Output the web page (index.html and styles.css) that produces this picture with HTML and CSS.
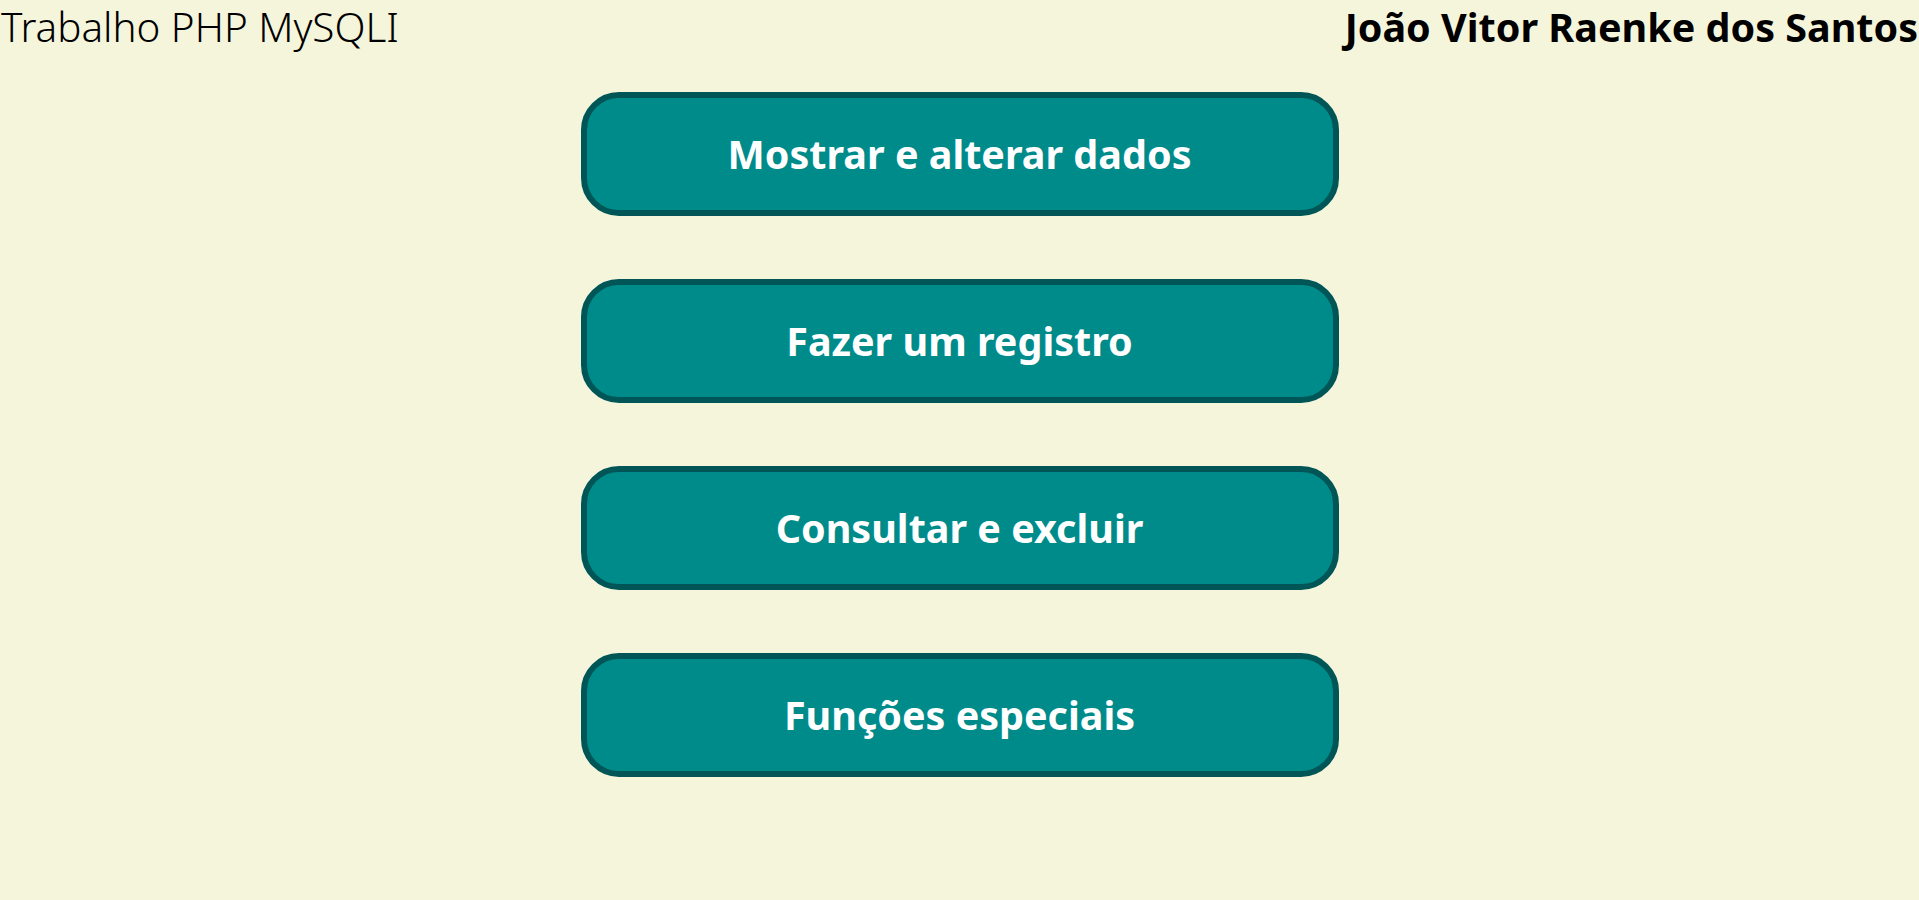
FILE: index.html
```html
<!DOCTYPE html>
<html lang="pt-BR">
<head>
<meta charset="utf-8">
<title>Trabalho PHP MySQLI</title>
<link rel="stylesheet" href="styles.css">
</head>
<body>
<header class="topbar">
  <h1 class="title">Trabalho PHP MySQLI</h1>
  <h2 class="author">João Vitor Raenke dos Santos</h2>
</header>
<main class="menu">
  <a class="menu-btn" href="#">Mostrar e alterar dados</a>
  <a class="menu-btn" href="#">Fazer um registro</a>
  <a class="menu-btn" href="#">Consultar e excluir</a>
  <a class="menu-btn" href="#">Funções especiais</a>
</main>
</body>
</html>
```
FILE: styles.css
```css
html, body {
  margin: 0;
  padding: 0;
}
body {
  background: #f5f5dc;
  font-family: "Noto Sans", "Open Sans", sans-serif;
  color: #000;
}
.topbar {
  display: flex;
  justify-content: space-between;
  align-items: flex-start;
  height: 55px;
}
.title {
  margin: 0 0 0 1px;
  font-size: 40.4px;
  font-weight: 300;
  line-height: 54px;
}
.author {
  margin: 0 1px 0 0;
  font-size: 39.5px;
  font-weight: 700;
  line-height: 54px;
}
.menu {
  display: flex;
  flex-direction: column;
  align-items: center;
  gap: 63px;
  padding-top: 37px;
}
.menu-btn {
  box-sizing: border-box;
  width: 758px;
  height: 124px;
  display: flex;
  align-items: center;
  justify-content: center;
  background: #008b8b;
  border: 6px solid #005656;
  border-radius: 38px;
  color: #fff;
  font-size: 39.5px;
  font-weight: 700;
  text-decoration: none;
}
```
